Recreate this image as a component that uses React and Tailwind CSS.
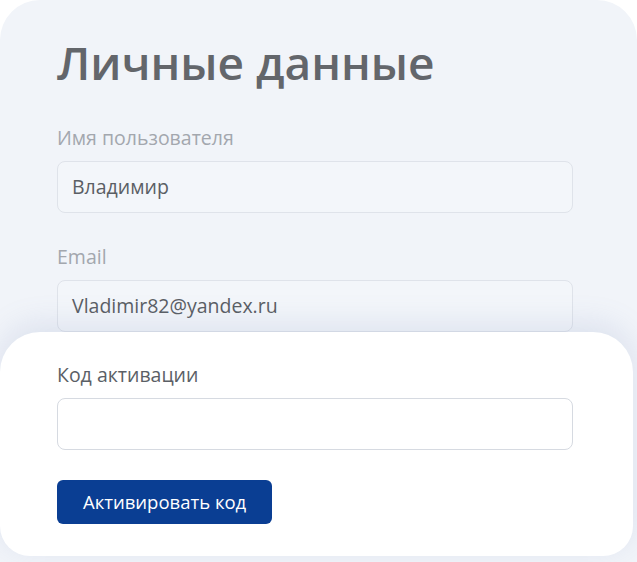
import React from 'react';

const font = { fontFamily: '"Open Sans", "Noto Sans", sans-serif' };

const Field = ({ label, value, muted }) => (
    <div className="flex flex-col">
        <label className={`text-[19.5px] leading-6 ${muted ? 'text-[#a3a7ae]' : 'text-[#5b5f66]'}`}>{label}</label>
        <div
            className={`mt-[11px] w-[516px] h-[52px] rounded-lg border flex items-center px-[14px] text-[19.5px] text-[#5a5e64] ${muted ? 'bg-[#f3f6fa] border-[#dfe3ea]' : 'bg-white border-[#d6dae1]'}`}
        >
            {value}
        </div>
    </div>
);

export default function App() {
    return (
        <div className="w-[637px] h-[562px] bg-white overflow-hidden" style={font}>
            <div className="h-full bg-[#f1f4f9] rounded-tl-[40px] rounded-tr-[40px] flex flex-col">
                {/* Personal data */}
                <div className="px-[57px] pt-[30px] h-[332px] shrink-0">
                    <h1 className="text-[46px] leading-[64px] font-semibold text-[#63666b]">Личные данные</h1>
                    <div className="mt-[32px] flex flex-col gap-[32px]">
                        <Field label="Имя пользователя" value="Владимир" muted />
                        <Field label="Email" value="Vladimir82@yandex.ru" muted />
                    </div>
                </div>

                {/* Activation */}
                <div className="w-[633px] h-[224px] bg-white rounded-t-[40px] rounded-b-[30px] shadow-[0_-8px_30px_rgba(120,140,190,0.18)] px-[57px] pt-[31px]">
                    <Field label="Код активации" value="" />
                    <button className="mt-[30px] h-[44px] px-[26px] rounded-md bg-[#0a3e93] text-white text-[18.5px]">
                        Активировать код
                    </button>
                </div>
            </div>
        </div>
    );
}
